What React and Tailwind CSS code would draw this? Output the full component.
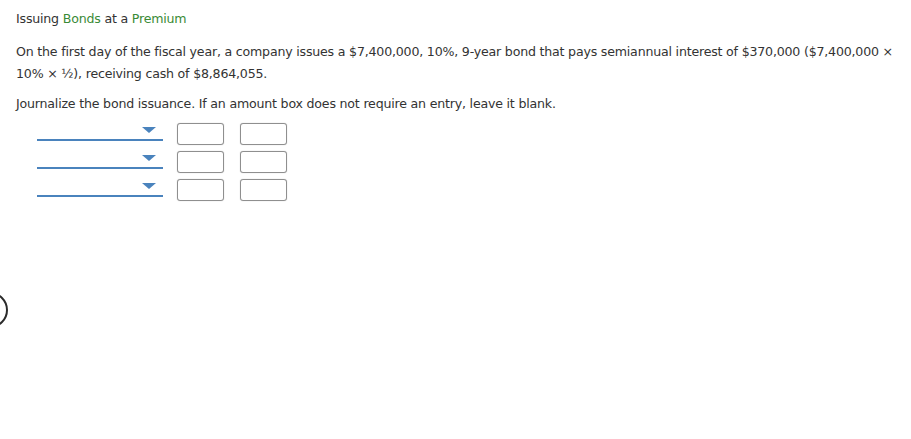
function DropRow() {
  return (
    <div className="flex items-start h-[28px]">
      <div className="relative w-[126px] h-[18px] ml-[21px] border-b-2 border-[#4a83bd]">
        <div className="absolute left-[105px] top-[4px] w-0 h-0 border-l-[7px] border-r-[7px] border-t-[6px] border-l-transparent border-r-transparent border-t-[#4a83bd]" />
      </div>
      <div className="ml-[14px] w-[47px] h-[22px] rounded-[3px] border border-[#8f8f8f] bg-white shadow-[0_0_1px_rgba(0,0,0,0.3)]" />
      <div className="ml-[16px] w-[47px] h-[22px] rounded-[3px] border border-[#8f8f8f] bg-white shadow-[0_0_1px_rgba(0,0,0,0.3)]" />
    </div>
  );
}

export default function App() {
  return (
    <div className="relative w-[911px] h-[439px] bg-white overflow-hidden text-[12.6px] text-[#333] font-['DejaVu_Sans',Verdana,sans-serif] tracking-[-0.2px]">
      <div className="pl-[16px] pt-[9px] pr-[16px]">
        <p className="leading-[20px]">
          Issuing <span className="text-[#3a8a36]">Bonds</span> at a <span className="text-[#3a8a36]">Premium</span>
        </p>
        <p className="mt-[12px] leading-[22px]">
          On the first day of the fiscal year, a company issues a $7,400,000, 10%, 9-year bond that pays semiannual interest of $370,000 ($7,400,000 × 10% × ½), receiving cash of $8,864,055.
        </p>
        <p className="mt-[9px] leading-[20px]">
          Journalize the bond issuance. If an amount box does not require an entry, leave it blank.
        </p>
        <div className="mt-[9px]">
          <DropRow />
          <DropRow />
          <DropRow />
        </div>
      </div>
      <div className="absolute left-[-28px] top-[292px] w-[36px] h-[36px] rounded-full border-2 border-[#2b2b2b]" />
    </div>
  );
}
